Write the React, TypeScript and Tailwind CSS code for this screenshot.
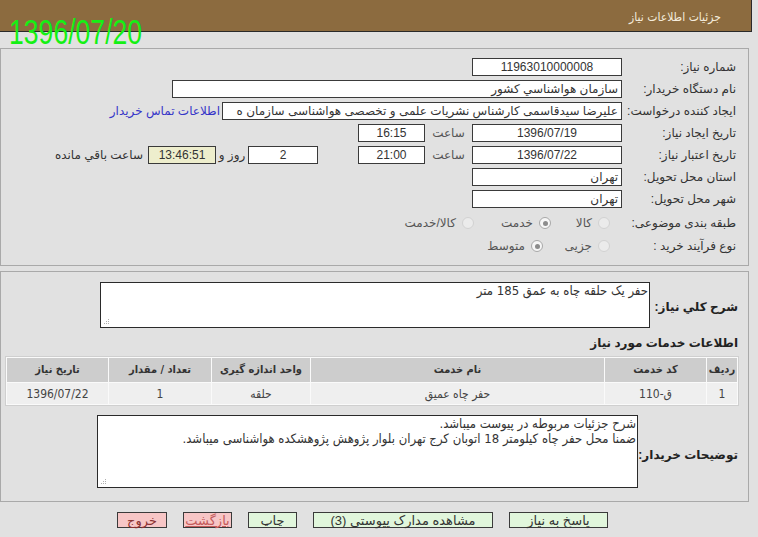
import React from "react";

const box = "flex h-[18px] items-center border border-[#3a3a3a] px-[3px]";

function Radio({ checked }: { checked?: boolean }) {
  return checked ? (
    <span className="flex h-[12px] w-[12px] shrink-0 items-center justify-center rounded-full border border-[#a8a8a8] bg-[#f6f6f6]">
      <span className="h-[5px] w-[5px] rounded-full bg-[#8c8c8c]" />
    </span>
  ) : (
    <span className="h-[12px] w-[12px] shrink-0 rounded-full border border-[#d2d2d2] bg-[#ebebeb]" />
  );
}

function Grip() {
  return (
    <svg className="absolute bottom-[2px] left-[2px]" width="7" height="7" viewBox="0 0 7 7">
      <rect x="5" y="1" width="1" height="1" fill="#b0b0b0" />
      <rect x="3" y="3" width="1" height="1" fill="#b0b0b0" />
      <rect x="5" y="3" width="1" height="1" fill="#b0b0b0" />
      <rect x="1" y="5" width="1" height="1" fill="#b0b0b0" />
      <rect x="3" y="5" width="1" height="1" fill="#b0b0b0" />
      <rect x="5" y="5" width="1" height="1" fill="#b0b0b0" />
    </svg>
  );
}

function Row({ label, children, h = "h-[22px]" }: { label: string; children?: React.ReactNode; h?: string }) {
  return (
    <div className={`flex items-center ${h}`}>
      <div className="w-[116px] shrink-0 pr-[2px] whitespace-nowrap">{label}</div>
      {children}
    </div>
  );
}

const columns = [
  { title: "ردیف", w: "w-[30px]", value: "1" },
  { title: "کد خدمت", w: "w-[101px]", value: "ق-110" },
  { title: "نام خدمت", w: "w-[293px]", value: "حفر چاه عمیق" },
  { title: "واحد اندازه گیری", w: "w-[98px]", value: "حلقه" },
  { title: "تعداد / مقدار", w: "w-[102px]", value: "1" },
  { title: "تاریخ نیاز", w: "w-[101px]", value: "1396/07/22" },
];

const buttons = [
  { label: "پاسخ به نیاز", w: "w-[99px]", red: false },
  { label: "مشاهده مدارک پیوستي (3)", w: "w-[180px]", red: false },
  { label: "چاپ", w: "w-[49px]", red: false },
  { label: "بازگشت", w: "w-[49px]", red: true, link: true },
  { label: "خروج", w: "w-[50px]", red: true },
];

export default function App() {
  return (
    <div className="relative h-[537px] w-[758px] overflow-hidden bg-[#e1e1e1] font-['Liberation_Sans','DejaVu_Sans',sans-serif] text-[12px] text-[#333]">
      <div
        dir="rtl"
        className="flex h-[32px] w-[752px] items-center border-r border-b border-[#2a2a2a] bg-[#8c6b3f] pr-[30px] pt-[2px] font-['DejaVu_Sans_Condensed','DejaVu_Sans',sans-serif] text-[12px] text-[#f4ecdc]"
      >
        جزئیات اطلاعات نیاز
      </div>

      <div className="absolute left-[9px] top-[14px] origin-left scale-x-[0.76] font-['Liberation_Sans',sans-serif] text-[35px] leading-[36px] text-[#14f014]">
        1396/07/20
      </div>

      <div dir="rtl" className="w-[749px]">
        <section className="mt-[16px] h-[218px] border border-[#a9a9a9] pr-[10px] pt-[7px]">
          <Row label="شماره نیاز:">
            <div className={`${box} w-[150px] justify-center bg-white`}>11963010000008</div>
          </Row>
          <Row label="نام دستگاه خریدار:">
            <div className={`${box} w-[450px] bg-white`}>سازمان هواشناسي کشور</div>
          </Row>
          <Row label="ایجاد کننده درخواست:">
            <div className={`${box} w-[400px] overflow-hidden bg-white`}>
              <span className="whitespace-nowrap">علیرضا سیدقاسمی کارشناس نشریات علمی و تخصصی هواشناسی سازمان ه</span>
            </div>
            <span className="mr-[2px] whitespace-nowrap text-[#3535c8]">اطلاعات تماس خریدار</span>
          </Row>
          <Row label="تاریخ ایجاد نیاز:">
            <div className={`${box} w-[150px] justify-center bg-white`}>1396/07/19</div>
            <div className="w-[47px] text-center text-[#555]">ساعت</div>
            <div className={`${box} w-[67px] justify-center bg-white`}>16:15</div>
          </Row>
          <Row label="تاریخ اعتبار نیاز:">
            <div className={`${box} w-[150px] justify-center bg-white`}>1396/07/22</div>
            <div className="w-[47px] text-center text-[#555]">ساعت</div>
            <div className={`${box} w-[67px] justify-center bg-white`}>21:00</div>
            <div className={`${box} mr-[40px] w-[70px] justify-center bg-white`}>2</div>
            <div className="w-[32px] text-center whitespace-nowrap">روز و</div>
            <div className={`${box} w-[68px] justify-center bg-[#eeeecd]`}>13:46:51</div>
            <span className="mr-[5px] whitespace-nowrap">ساعت باقي مانده</span>
          </Row>
          <Row label="استان محل تحویل:">
            <div className={`${box} w-[150px] bg-white`}>تهران</div>
          </Row>
          <Row label="شهر محل تحویل:">
            <div className={`${box} w-[150px] bg-white`}>تهران</div>
          </Row>
          <Row label="طبقه بندی موضوعی:" h="h-[26px]">
            <div className="mr-[12px] flex items-center text-[#555]">
              <label className="flex w-[59px] items-center gap-[6px]">
                <Radio />
                کالا
              </label>
              <label className="flex w-[77px] items-center gap-[6px]">
                <Radio checked />
                خدمت
              </label>
              <label className="flex items-center gap-[6px]">
                <Radio />
                کالا/خدمت
              </label>
            </div>
          </Row>
          <Row label="نوع فرآیند خرید :" h="h-[20px]">
            <div className="mr-[12px] flex items-center text-[#555]">
              <label className="flex w-[67px] items-center gap-[6px]">
                <Radio />
                جزیی
              </label>
              <label className="flex items-center gap-[6px]">
                <Radio checked />
                متوسط
              </label>
            </div>
          </Row>
        </section>

        <section className="mt-[5px] h-[231px] border border-[#a9a9a9] pr-[10px] pt-[10px]">
          <div className="flex items-center">
            <div className="w-[88px] shrink-0 pt-[4px] text-[12px] font-bold whitespace-nowrap text-[#222]">شرح کلي نیاز:</div>
            <div className="relative h-[46px] w-[550px] border border-[#2a2a2a] bg-white px-[1px] font-['DejaVu_Sans_Condensed','DejaVu_Sans',sans-serif] text-[13px] leading-[16px]">
              حفر یک حلقه چاه به عمق 185 متر
              <Grip />
            </div>
          </div>

          <div className="mt-[7px] h-[16px] text-[12px] font-bold leading-[16px] text-[#222]">اطلاعات خدمات مورد نیاز</div>

          <table className="mt-[5px] -mr-[1px] w-[733px] table-fixed border-separate border-spacing-[1px] border border-[#cfcfcf] bg-[#fafafa] font-['DejaVu_Sans_Condensed','DejaVu_Sans',sans-serif] text-[11px]">
            <thead>
              <tr className="h-[24px]">
                {columns.map((c) => (
                  <th key={c.title} className={`${c.w} bg-[#cdcdcd] text-center font-bold text-[#333]`}>
                    {c.title}
                  </th>
                ))}
              </tr>
            </thead>
            <tbody>
              <tr className="h-[21px]">
                {columns.map((c) => (
                  <td key={c.title} className="bg-[#efefef] text-center text-[12px] text-[#444]">
                    {c.value}
                  </td>
                ))}
              </tr>
            </tbody>
          </table>

          <div className="mt-[9px] flex items-center">
            <div className="w-[100px] shrink-0 pt-[6px] text-[12px] font-bold whitespace-nowrap text-[#222]">توضیحات خریدار:</div>
            <div className="relative h-[73px] w-[541px] border border-[#2a2a2a] bg-white px-[1px] font-['DejaVu_Sans_Condensed','DejaVu_Sans',sans-serif] text-[13px] leading-[15px]">
              <div>شرح جزئیات مربوطه در پیوست میباشد.</div>
              <div>ضمنا محل حفر چاه کیلومتر 18 اتوبان کرج تهران بلوار پژوهش پژوهشکده هواشناسی میباشد.</div>
              <Grip />
            </div>
          </div>
        </section>

        <div className="mt-[10px] flex gap-[16px] pr-[141px]">
          {buttons.map((b) => (
            <div
              key={b.label}
              className={`flex h-[16px] ${b.w} items-center justify-center border border-[#3a3a3a] text-[13px] leading-none whitespace-nowrap ${
                b.red ? "bg-[#f7c6c6]" : "bg-[#e1f6dc] text-[#333]"
              } ${b.link ? "text-[#c45a5a] underline" : b.red ? "text-[#8a3030]" : ""}`}
            >
              {b.label}
            </div>
          ))}
        </div>
      </div>
    </div>
  );
}
